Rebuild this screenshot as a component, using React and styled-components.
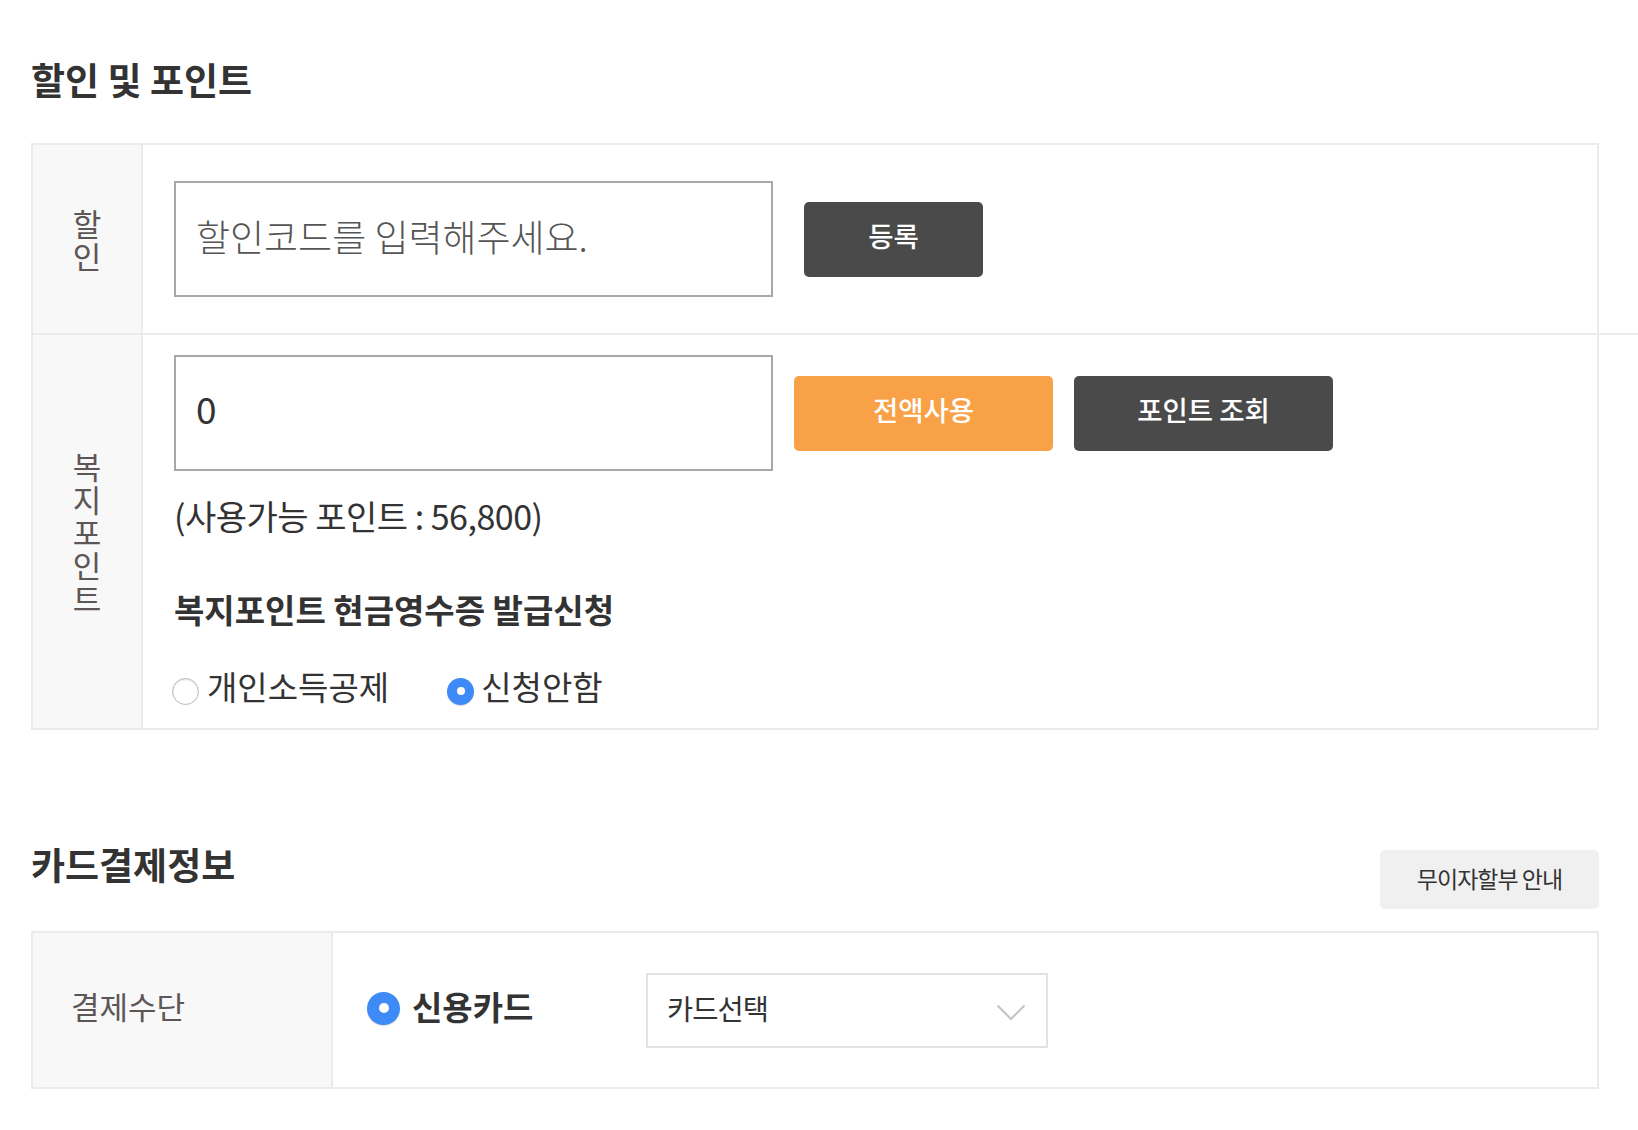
import React, { useState } from 'react'
import styled, { createGlobalStyle } from 'styled-components'

const GlobalStyle = createGlobalStyle`
  body {
    margin: 0;
    background: #fff;
    color: #333;
    font-family: "Noto Sans CJK KR", "Noto Sans", sans-serif;
  }
  * { box-sizing: border-box; }
`

const Page = styled.div`
  width: 1568px;
  padding: 54px 0 40px 0;
  margin-left: 31px;
`

const SectionTitle = styled.h2`
  margin: 0;
  font-size: 37px;
  line-height: 51px;
  font-weight: 700;
  color: #333;
`

const Table = styled.div`
  border: 2px solid #ebebeb;
  margin-top: ${p => p.$top}px;
`

const Row = styled.div`
  display: grid;
  grid-template-columns: ${p => p.$label}px 1fr;
  position: relative;
  & + & { border-top: 2px solid #ebebeb; }
  ${p => p.$longLine && `
    &::after {
      content: '';
      position: absolute;
      left: 0;
      right: -42px;
      bottom: -2px;
      height: 2px;
      background: #ebebeb;
    }
  `}
`

const LabelCell = styled.div`
  background: #f8f8f8;
  border-right: 2px solid #ebebeb;
  display: flex;
  align-items: center;
  justify-content: ${p => (p.$left ? 'flex-start' : 'center')};
  padding-left: ${p => (p.$left ? '38px' : '0')};
  padding-bottom: ${p => (p.$left ? '10px' : '0')};
  color: #5c5656;
  font-size: 31px;
`

const VerticalText = styled.span`
  width: 1em;
  word-break: break-all;
  text-align: center;
  line-height: 33px;
`

const ContentCell = styled.div`
  padding: ${p => p.$pad};
  display: flex;
  flex-direction: column;
`

const InputLine = styled.div`
  display: flex;
  align-items: center;
`

const TextInput = styled.input`
  width: 599px;
  height: 116px;
  border: 2px solid #a8a8a8;
  padding: 0 0 ${p => p.$lift || 0}px 20px;
  font-family: inherit;
  font-size: 37px;
  color: #333;
  outline: none;
  background: #fff;
  &::placeholder {
    color: #555;
    font-weight: 300;
  }
`

const ActionButton = styled.button`
  width: ${p => p.$w}px;
  height: 75px;
  margin-left: ${p => p.$ml}px;
  border: none;
  border-radius: 5px;
  background: ${p => (p.$orange ? '#f8a147' : '#4a4a4a')};
  color: #fff;
  font-family: inherit;
  font-size: 27.5px;
  font-weight: 500;
  padding-bottom: 10px;
  cursor: pointer;
`

const Available = styled.p`
  margin: 22px 0 0;
  font-size: 34px;
  line-height: 46px;
  letter-spacing: -0.5px;
  color: #333;
`

const SubTitle = styled.h3`
  margin: 48px 0 0;
  font-size: 33px;
  line-height: 45px;
  font-weight: 700;
  color: #333;
`

const RadioRow = styled.div`
  margin-top: 32px;
  display: flex;
  align-items: center;
  margin-left: -2px;
`

const RadioOption = styled.label`
  display: flex;
  align-items: center;
  font-size: ${p => p.$size}px;
  font-weight: ${p => (p.$bold ? 700 : 400)};
  line-height: 45px;
  color: #333;
  margin-right: ${p => p.$mr || 0}px;
  cursor: pointer;
`

const RadioDot = styled.span`
  width: ${p => p.$d}px;
  height: ${p => p.$d}px;
  border-radius: 50%;
  margin-right: ${p => p.$gap}px;
  margin-top: ${p => p.$shift}px;
  flex-shrink: 0;
  display: flex;
  align-items: center;
  justify-content: center;
  background: ${p => (p.$on ? '#3e8af7' : '#fff')};
  border: ${p => (p.$on ? 'none' : '1.5px solid #b9b9b9')};
  box-shadow: ${p => (p.$on ? '0 1px 1px rgba(0,0,0,0.15)' : 'inset 0 1px 2px rgba(0,0,0,0.12)')};
  &::after {
    content: '';
    display: ${p => (p.$on ? 'block' : 'none')};
    width: ${p => Math.round(p.$d / 3.2)}px;
    height: ${p => Math.round(p.$d / 3.2)}px;
    border-radius: 50%;
    background: #fff;
  }
`

const Header = styled.div`
  margin-top: 109px;
  display: flex;
  justify-content: space-between;
  align-items: flex-start;
`

const GuideButton = styled.button`
  margin-top: 11px;
  width: 219px;
  height: 59px;
  border: none;
  border-radius: 5px;
  background: #f0f0f0;
  color: #333;
  font-family: inherit;
  font-size: 23px;
  letter-spacing: -1px;
  padding-bottom: 4px;
  cursor: pointer;
`

const PayCell = styled.div`
  height: 154px;
  display: flex;
  align-items: center;
  padding-left: 34px;
`

const PayOption = styled.div`
  width: 279px;
  display: flex;
  align-items: center;
  padding-bottom: 8px;
`

const SelectBox = styled.div`
  width: 402px;
  height: 75px;
  border: 2px solid #e2e2e2;
  display: flex;
  align-items: center;
  justify-content: space-between;
  padding: 0 20px 6px 19px;
  font-size: 28.5px;
  letter-spacing: -1px;
  color: #333;
  cursor: pointer;
  svg { margin-top: 10px; }
`

const Radio = ({ on, d, gap, shift, size, bold, mr, children, onClick }) => (
  <RadioOption $size={size} $bold={bold} $mr={mr} onClick={onClick}>
    <RadioDot $on={on} $d={d} $gap={gap} $shift={shift} />
    {children}
  </RadioOption>
)

export default function App() {
  const [receipt, setReceipt] = useState('none')

  return (
    <Page>
      <GlobalStyle />
      <SectionTitle>할인 및 포인트</SectionTitle>
      <Table $top={38}>
        <Row $label={110} $longLine>
          <LabelCell><VerticalText>할인</VerticalText></LabelCell>
          <ContentCell $pad="36px 0 36px 31px">
            <InputLine>
              <TextInput $lift={6} placeholder="할인코드를 입력해주세요." />
              <ActionButton $w={179} $ml={31}>등록</ActionButton>
            </InputLine>
          </ContentCell>
        </Row>
        <Row $label={110}>
          <LabelCell><VerticalText>복지포인트</VerticalText></LabelCell>
          <ContentCell $pad="20px 0 19px 31px">
            <InputLine>
              <TextInput $lift={10} defaultValue="0" />
              <ActionButton $w={259} $ml={21} $orange>전액사용</ActionButton>
              <ActionButton $w={259} $ml={21}>포인트 조회</ActionButton>
            </InputLine>
            <Available>(사용가능 포인트 : 56,800)</Available>
            <SubTitle>복지포인트 현금영수증 발급신청</SubTitle>
            <RadioRow>
              <Radio on={receipt === 'deduct'} d={27} gap={8} shift={9} size={33} mr={58} onClick={() => setReceipt('deduct')}>
                개인소득공제
              </Radio>
              <Radio on={receipt === 'none'} d={27} gap={7} shift={9} size={33} onClick={() => setReceipt('none')}>
                신청안함
              </Radio>
            </RadioRow>
          </ContentCell>
        </Row>
      </Table>

      <Header>
        <SectionTitle>카드결제정보</SectionTitle>
        <GuideButton>무이자할부 안내</GuideButton>
      </Header>
      <Table $top={22}>
        <Row $label={300}>
          <LabelCell $left>결제수단</LabelCell>
          <PayCell>
            <PayOption>
              <Radio on d={33} gap={12} shift={4} size={33} bold>신용카드</Radio>
            </PayOption>
            <SelectBox>
              <span>카드선택</span>
              <svg width="30" height="17" viewBox="0 0 30 17" fill="none">
                <path d="M1.5 1.5 L15 15 L28.5 1.5" stroke="#c9c5c5" strokeWidth="2.2" />
              </svg>
            </SelectBox>
          </PayCell>
        </Row>
      </Table>
    </Page>
  )
}
